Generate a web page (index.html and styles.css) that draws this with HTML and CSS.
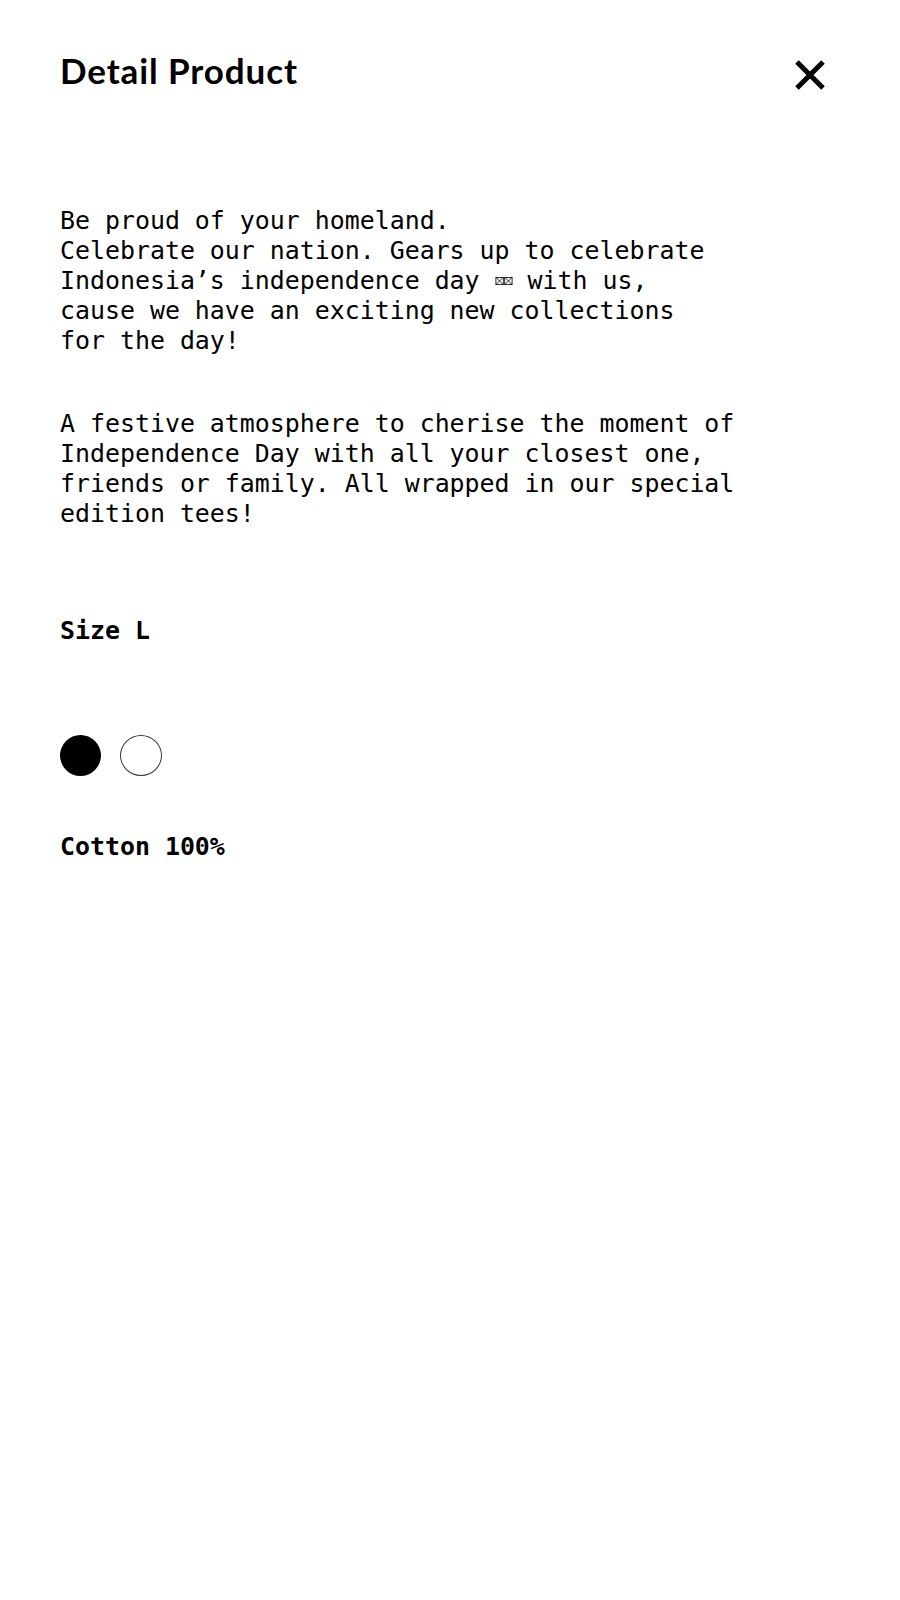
FILE: index.html
```html
<!DOCTYPE html>
<html lang="en">
<head>
<meta charset="utf-8">
<title>Detail Product</title>
<link rel="stylesheet" href="styles.css">
</head>
<body>
<div class="page">
  <header class="header">
    <h1 class="title">Detail Product</h1>
    <button class="close" aria-label="Close">
      <svg width="30" height="30" viewBox="0 0 30 30" aria-hidden="true">
        <path d="M2 2 L28 28 M28 2 L2 28" stroke="#000" stroke-width="5" fill="none"/>
      </svg>
    </button>
  </header>

  <p class="desc desc-first">Be proud of your homeland.<br>Celebrate our nation. Gears up to celebrate<br>Indonesia’s independence day <svg class="flag" role="img" aria-label="🇮🇩" width="18" height="8" viewBox="0 0 18 8"><g fill="none" stroke="#000" stroke-width="0.8"><rect x="0.9" y="0.4" width="7.4" height="7.2"/><path d="M0.9 0.4 L8.3 7.6 M8.3 0.4 L0.9 7.6"/><rect x="9.7" y="0.4" width="7.4" height="7.2"/><path d="M9.7 0.4 L17.1 7.6 M17.1 0.4 L9.7 7.6"/></g></svg> with us,<br>cause we have an exciting new collections<br>for the day!</p>

  <p class="desc desc-second">A festive atmosphere to cherise the moment of<br>Independence Day with all your closest one,<br>friends or family. All wrapped in our special<br>edition tees!</p>

  <p class="spec size">Size L</p>

  <div class="colors">
    <span class="swatch swatch-black"></span>
    <span class="swatch swatch-white"></span>
  </div>

  <p class="spec material">Cotton 100%</p>
</div>
</body>
</html>
```

FILE: styles.css
```css
html, body {
  margin: 0;
  padding: 0;
  background: #fff;
  color: #000;
}

.page {
  padding: 50px 60px 0 60px;
  font-family: "DejaVu Sans Mono", "Liberation Mono", monospace;
}

.header {
  display: flex;
  justify-content: space-between;
  align-items: center;
  height: 40px;
}

.title {
  margin: 0;
  font-family: Lato, "Open Sans", sans-serif;
  font-weight: 700;
  font-size: 35px;
  letter-spacing: 0.9px;
  line-height: 40px;
  color: #000;
}

.close {
  margin: 9px 15px 0 0;
  padding: 0;
  border: 0;
  background: none;
  width: 30px;
  height: 30px;
  display: block;
}

.close svg {
  display: block;
}

.desc {
  margin: 0;
  font-size: 24.9px;
  line-height: 30px;
  white-space: nowrap;
}

.flag {
  vertical-align: 4px;
}

.desc-first {
  margin-top: 116px;
}

.desc-second {
  margin-top: 53px;
}

.spec {
  margin: 0;
  font-size: 24.9px;
  line-height: 30px;
  font-weight: 700;
}

.size {
  margin-top: 87px;
}

.colors {
  display: flex;
  gap: 19px;
  margin-top: 89px;
}

.swatch {
  display: block;
  width: 41px;
  height: 41px;
  border-radius: 50%;
  box-sizing: border-box;
}

.swatch-black {
  background: #000;
}

.swatch-white {
  background: #fff;
  border: 1px solid #333;
  width: 42px;
  height: 41px;
}

.material {
  margin-top: 56px;
}
```
